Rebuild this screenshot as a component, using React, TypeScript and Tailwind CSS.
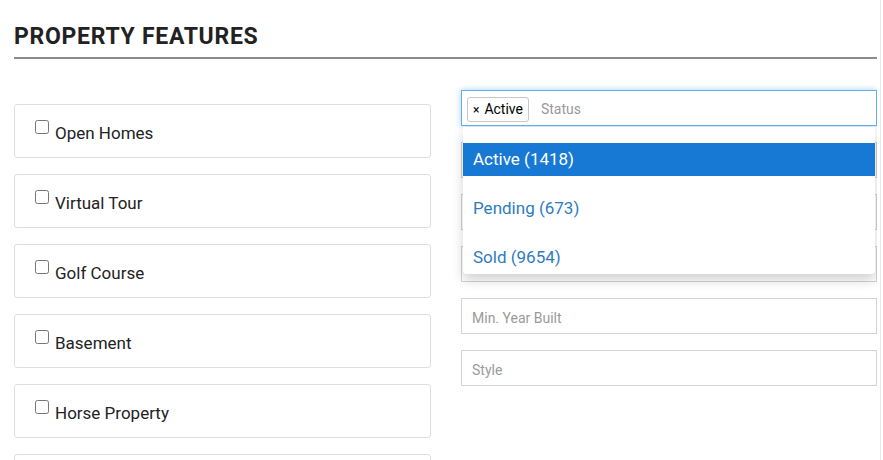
import { useState } from "react";

const features = ["Open Homes", "Virtual Tour", "Golf Course", "Basement", "Horse Property"];

const statusOptions = [
  { label: "Active", count: 1418 },
  { label: "Pending", count: 673 },
  { label: "Sold", count: 9654 },
];

const fields = ["Property Type", "Min. Lot Size", "Max. Lot Size", "Min. Year Built", "Style"];

const App = () => {
  const [checked, setChecked] = useState<Record<string, boolean>>({});

  return (
    <div className="min-h-screen w-[881px] border-r border-[#e8e8e8] bg-white font-['Roboto','Liberation_Sans',sans-serif] text-[#222]">
      <div className="w-[863px] ml-[14px] pt-[24px]">
        <h2 className="text-[23px] leading-[26px] font-bold tracking-[0.7px]">PROPERTY FEATURES</h2>
        <div className="mt-[7px] h-[2px] bg-[#8c8c8c]" />

        <div className="flex gap-[30px] h-[402px] overflow-hidden">
          {/* checkbox boxes */}
          <div className="w-[417px] pt-[45px] flex flex-col gap-[16px]">
            {features.map((f) => (
              <label
                key={f}
                className="h-[54px] shrink-0 rounded-[3px] border border-[#dedede] pl-[20px] pt-[15px] flex items-start"
              >
                <input
                  type="checkbox"
                  checked={!!checked[f]}
                  onChange={() => setChecked({ ...checked, [f]: !checked[f] })}
                  className="w-[14px] h-[14px] mt-[0px] m-0 accent-[#1779d4]"
                />
                <span className="ml-[6px] mt-[3px] text-[17px] leading-[20px]">{f}</span>
              </label>
            ))}
            <div className="h-[54px] shrink-0 rounded-[3px] border border-[#dedede]" />
          </div>

          {/* right column */}
          <div className="w-[416px] pt-[31px] flex flex-col gap-[16px] relative">
            <div className="relative shrink-0">
              <div className="h-[36px] border border-[#66afe9] shadow-[0_0_6px_rgba(102,175,233,0.6)] flex items-center pl-[5px] pt-[3px]">
                <span className="h-[25px] px-[5px] rounded-[3px] border border-[#c8c8c8] flex items-center text-[14px] text-black">
                  <span className="text-[12px] mr-[5px]">×</span>Active
                </span>
                <span className="ml-[12px] text-[14px] text-[#999]">Status</span>
              </div>
              <ul className="absolute z-10 left-[2px] right-[2px] top-[37px] bg-white rounded-b-[4px] shadow-[0_6px_12px_rgba(0,0,0,0.18)] pt-[16px] flex flex-col gap-[16px]">
                {statusOptions.map((o, i) => (
                  <li
                    key={o.label}
                    className={
                      i === 0
                        ? "h-[33px] pl-[10px] flex items-center text-[17px] bg-[#1779d4] text-white"
                        : "h-[33px] pl-[10px] flex items-center text-[17px] text-[#2f7bbf]"
                    }
                  >
                    {o.label} ({o.count})
                  </li>
                ))}
              </ul>
            </div>

            {fields.map((p) => (
              <input
                key={p}
                placeholder={p}
                className="h-[36px] shrink-0 border border-[#d3d3d8] px-[10px] pt-[4px] text-[14px] placeholder:text-[#9a9a9a] outline-none"
              />
            ))}
          </div>
        </div>
      </div>
    </div>
  );
};

export default App;
